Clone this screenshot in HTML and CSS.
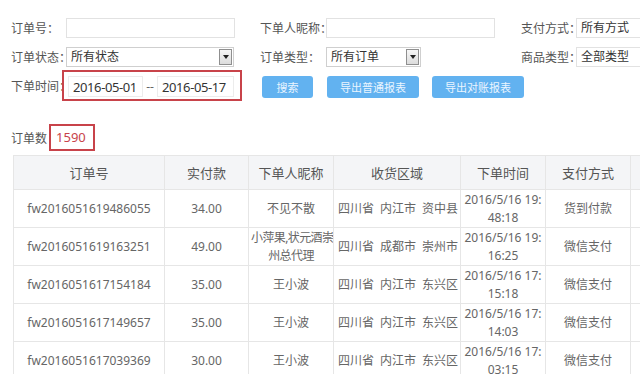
FILE: index.html
```html
<!DOCTYPE html>
<html lang="zh-CN">
<head>
  <meta charset="UTF-8" />
  <meta name="viewport" content="width=device-width, initial-scale=1.0"/>
  <title>订单管理</title>
  <link rel="stylesheet" href="styles.css">
</head>
<body>

<!-- Filters -->
<div class="filters">
  <div class="row">
    <div class="field">
      <label class="lbl">订单号：</label>
      <input class="txt" type="text">
    </div>
    <div class="field field-mid">
      <label class="lbl lbl-wide">下单人昵称：</label>
      <input class="txt" type="text">
    </div>
    <div class="field field-last">
      <label class="lbl">支付方式：</label>
      <div class="txt txt-fill">所有方式</div>
    </div>
  </div>

  <div class="row row-2">
    <div class="field">
      <label class="lbl">订单状态：</label>
      <div class="select">所有状态<span class="arrow"></span></div>
    </div>
    <div class="field field-mid">
      <label class="lbl lbl-wide">订单类型：</label>
      <div class="select select-short">所有订单<span class="arrow"></span></div>
    </div>
    <div class="field field-last">
      <label class="lbl">商品类型：</label>
      <div class="txt txt-fill">全部类型</div>
    </div>
  </div>

  <div class="row row-date">
    <div class="field">
      <label class="lbl lbl-date">下单时间：</label>
      <div class="mark date-range">
        <input class="date" type="text" value="2016-05-01">
        <span class="dash">--</span>
        <input class="date date-end" type="text" value="2016-05-17">
      </div>
    </div>
    <div class="actions">
      <button class="btn btn-search">搜索</button>
      <button class="btn btn-export">导出普通报表</button>
      <button class="btn btn-export">导出对账报表</button>
    </div>
  </div>
</div>

<div class="count">
  <span class="count-label">订单数</span>
  <span class="mark count-num">1590</span>
</div>

<table class="orders">
  <colgroup>
    <col style="width:151px">
    <col style="width:84px">
    <col style="width:85px">
    <col style="width:127px">
    <col style="width:85px">
    <col style="width:85px">
    <col style="width:90px">
  </colgroup>
  <thead>
    <tr>
      <th>订单号</th>
      <th>实付款</th>
      <th>下单人昵称</th>
      <th>收货区域</th>
      <th>下单时间</th>
      <th>支付方式</th>
      <th></th>
    </tr>
  </thead>
  <tbody>
    <tr>
      <td>fw2016051619486055</td>
      <td>34.00</td>
      <td>不见不散</td>
      <td class="area"><span>四川省</span><span>内江市</span><span>资中县</span></td>
      <td>2016/5/16 19:<br>48:18</td>
      <td>货到付款</td>
      <td></td>
    </tr>
    <tr>
      <td>fw2016051619163251</td>
      <td>49.00</td>
      <td class="name-long">小萍果,状元酒崇<br>州总代理</td>
      <td class="area"><span>四川省</span><span>成都市</span><span>崇州市</span></td>
      <td>2016/5/16 19:<br>16:25</td>
      <td>微信支付</td>
      <td></td>
    </tr>
    <tr>
      <td>fw2016051617154184</td>
      <td>35.00</td>
      <td>王小波</td>
      <td class="area"><span>四川省</span><span>内江市</span><span>东兴区</span></td>
      <td>2016/5/16 17:<br>15:18</td>
      <td>微信支付</td>
      <td></td>
    </tr>
    <tr>
      <td>fw2016051617149657</td>
      <td>35.00</td>
      <td>王小波</td>
      <td class="area"><span>四川省</span><span>内江市</span><span>东兴区</span></td>
      <td>2016/5/16 17:<br>14:03</td>
      <td>微信支付</td>
      <td></td>
    </tr>
    <tr>
      <td>fw2016051617039369</td>
      <td>30.00</td>
      <td>王小波</td>
      <td class="area"><span>四川省</span><span>内江市</span><span>东兴区</span></td>
      <td>2016/5/16 17:<br>03:15</td>
      <td>微信支付</td>
      <td></td>
    </tr>
  </tbody>
</table>

</body>
</html>
```

FILE: styles.css
```css
html, body {
  overflow: hidden;
}

body {
  margin: 0;
  padding: 0;
  background: #fff;
  color: #555;
  font-family: "Noto Sans", "Noto Sans CJK SC", sans-serif;
  font-size: 12px;
}

.filters {
  padding: 18px 0 0 11px;
}

.row {
  display: flex;
  align-items: center;
  height: 20px;
  margin-bottom: 9px;
  white-space: nowrap;
}

.row-2 {
  margin-bottom: 3px;
}

.row-date {
  height: 31px;
  margin-bottom: 0;
}

.field {
  display: flex;
  align-items: center;
  flex: 0 0 249px;
}

.field-mid {
  flex-basis: 261px;
}

.field-last {
  flex: 0 0 auto;
}

.lbl {
  flex: 0 0 55px;
  min-width: 0;
  color: #555;
  white-space: nowrap;
}

.lbl-wide {
  flex-basis: 66px;
}

.lbl-date {
  flex-basis: 51px;
}

.txt {
  box-sizing: border-box;
  width: 169px;
  height: 20px;
  border: 1px solid #e2e2e2;
  padding: 0 4px;
  background: #fff;
  font: inherit;
  color: #333;
  line-height: 18px;
  outline: none;
}

.txt-fill {
  width: 120px;
}

.select {
  position: relative;
  box-sizing: border-box;
  width: 168px;
  height: 20px;
  border: 1px solid #cfcfcf;
  padding: 0 4px;
  color: #333;
  line-height: 18px;
}

.select-short {
  width: 95px;
}

.arrow {
  position: absolute;
  top: 1px;
  right: 1px;
  width: 11px;
  height: 14px;
  border: 1px solid #8f8f8f;
  background: linear-gradient(#f7f7f7, #dcdcdc);
}

.arrow::after {
  content: "";
  position: absolute;
  top: 5px;
  left: 3px;
  border-left: 3px solid transparent;
  border-right: 3px solid transparent;
  border-top: 4px solid #222;
}

/* red highlight boxes */
.mark {
  border: 2px solid #c8434a;
}

.date-range {
  display: flex;
  align-items: center;
  padding: 4px 6px 2px 4px;
}

.date {
  box-sizing: border-box;
  width: 75px;
  height: 21px;
  border: 1px solid #ececec;
  padding: 0 0 0 4px;
  font: inherit;
  font-size: 13px;
  letter-spacing: -0.4px;
  color: #333;
  outline: none;
}

.date-end {
  width: 77px;
}

.dash {
  width: 14px;
  text-align: center;
  color: #666;
  font-size: 12px;
}

.actions {
  display: flex;
  gap: 13px;
  margin-left: 2px;
  padding-top: 2px;
}

.btn {
  height: 22px;
  border: none;
  border-radius: 3px;
  background: #62b2f0;
  color: #eaf5ff;
  font-family: inherit;
  font-size: 11px;
  padding: 0;
  cursor: pointer;
}

.btn-search {
  width: 51px;
  margin-right: 1px;
}

.btn-export {
  width: 92px;
}

.count {
  display: flex;
  align-items: center;
  margin: 23px 0 0 11px;
  height: 27px;
}

.count-label {
  color: #555;
  margin-right: 2px;
}

.count-num {
  box-sizing: border-box;
  width: 46px;
  height: 27px;
  padding-left: 5px;
  color: #c8434a;
  font-size: 13px;
  line-height: 23px;
}

.orders {
  margin: 4px 0 0 13px;
  border-collapse: collapse;
  table-layout: fixed;
  width: 707px;
  color: #666;
}

.orders th,
.orders td {
  border: 1px solid #e6e6e6;
  text-align: center;
  padding: 0 2px;
  overflow: hidden;
}

.orders th {
  height: 33px;
  background: #f4f5f7;
  color: #555;
  font-size: 13px;
  font-weight: normal;
}

.orders td {
  height: 37px;
  line-height: 18px;
  font-size: 12px;
}

.orders td.name-long {
  white-space: nowrap;
  letter-spacing: -0.6px;
}

.orders td.area {
  white-space: nowrap;
  text-align: left;
  padding-left: 4px;
}

.area span + span {
  margin-left: 6px;
}
```
